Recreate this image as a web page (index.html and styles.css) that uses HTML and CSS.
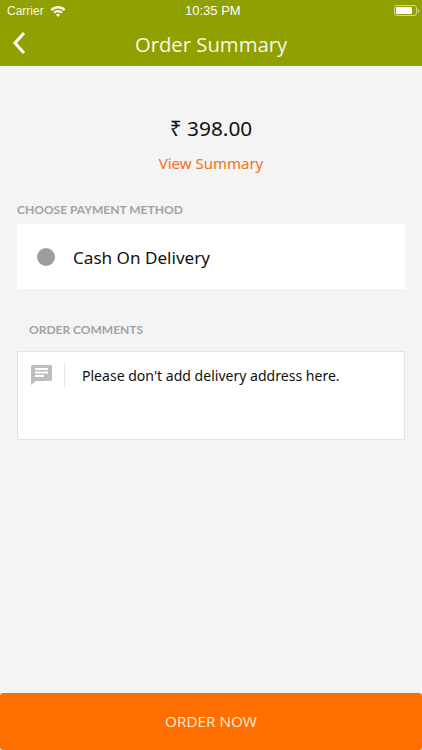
FILE: index.html
```html
<!DOCTYPE html>
<html lang="en">
<head>
    <meta charset="UTF-8">
    <meta name="viewport" content="width=device-width, initial-scale=1.0">
    <title>Order Summary</title>
    <link rel="stylesheet" href="styles.css">
</head>
<body>
    <header class="topbar">
        <div class="status-bar">
            <div class="status-left">
                <span>Carrier</span>
                <svg class="wifi-icon" viewBox="0 0 16 12" width="16" height="12">
                    <path d="M0.5 4.2 A10.5 10.5 0 0 1 15.5 4.2 L13.9 5.9 A8.2 8.2 0 0 0 2.1 5.9 Z" fill="#fff"/>
                    <path d="M3.2 7 A6.7 6.7 0 0 1 12.8 7 L11.2 8.6 A4.4 4.4 0 0 0 4.8 8.6 Z" fill="#fff"/>
                    <path d="M5.9 9.7 A3 3 0 0 1 10.1 9.7 L8 11.9 Z" fill="#fff"/>
                </svg>
            </div>
            <span class="status-time">10:35 PM</span>
            <div class="battery">
                <div class="battery-body"><div class="battery-level"></div></div>
                <div class="battery-tip"></div>
            </div>
        </div>
        <div class="navbar">
            <svg class="back-icon" viewBox="0 0 14 24" width="14" height="24">
                <path d="M12 2 L3 12 L12 22" fill="none" stroke="#fff" stroke-width="3"/>
            </svg>
            <h1 class="nav-title">Order Summary</h1>
        </div>
    </header>

    <main class="content">
        <div class="total">
            <div class="amount">₹ 398.00</div>
            <a class="view-summary" href="#">View Summary</a>
        </div>

        <h2 class="section-label">CHOOSE PAYMENT METHOD</h2>
        <div class="payment-card">
            <span class="radio-dot"></span>
            <span class="payment-name">Cash On Delivery</span>
        </div>

        <h2 class="section-label comments-label">ORDER COMMENTS</h2>
        <div class="comment-box">
            <div class="comment-icon">
                <svg viewBox="0 0 21 21" width="21" height="21">
                    <path d="M1.5 0 H19.5 A1.5 1.5 0 0 1 21 1.5 V14.5 A1.5 1.5 0 0 1 19.5 16 H5 L0 20 V1.5 A1.5 1.5 0 0 1 1.5 0 Z" fill="#bdbdbd"/>
                    <path d="M4 4 H17 M4 7.5 H17 M4 11 H13" stroke="#fff" stroke-width="1.8"/>
                </svg>
            </div>
            <p class="comment-text">Please don't add delivery address here.</p>
        </div>
    </main>

    <button class="order-button">ORDER NOW</button>
</body>
</html>
```

FILE: styles.css
```css
html, body {
    height: 100%;
}
body {
    font-family: "Open Sans", sans-serif;
    margin: 0;
    padding: 0;
    background-color: #f4f4f4;
    display: flex;
    flex-direction: column;
}
.topbar {
    background-color: #90a000;
    color: white;
    height: 66px;
    flex-shrink: 0;
}
.status-bar {
    display: flex;
    justify-content: space-between;
    align-items: center;
    height: 21px;
    padding: 0 3px 0 7px;
    font-family: "Liberation Sans", sans-serif;
    font-size: 12px;
    position: relative;
}
.status-left {
    display: flex;
    align-items: center;
    gap: 6px;
    opacity: 0.9;
}
.status-time {
    position: absolute;
    left: 185px;
    font-size: 13px;
}
.battery {
    display: flex;
    align-items: center;
}
.battery-body {
    width: 23px;
    height: 11px;
    border: 1px solid rgba(255, 255, 255, 0.6);
    border-radius: 3px;
    padding: 1px;
    box-sizing: border-box;
}
.battery-level {
    width: 16px;
    height: 100%;
    background-color: white;
    border-radius: 1px;
}
.battery-tip {
    width: 1px;
    height: 4px;
    background-color: rgba(255, 255, 255, 0.6);
    margin-left: 1px;
}
.navbar {
    display: flex;
    justify-content: center;
    align-items: center;
    height: 45px;
    position: relative;
}
.back-icon {
    position: absolute;
    left: 12px;
    top: 10px;
}
.nav-title {
    margin: 0;
    font-size: 20.3px;
    font-weight: 400;
    color: #f8f8e4;
}
.content {
    flex: 1;
    padding: 0 17px;
}
.total {
    text-align: center;
    padding-top: 48px;
}
.amount {
    font-family: "Noto Sans", sans-serif;
    font-size: 20.8px;
    line-height: 28px;
    color: #111;
}
.view-summary {
    display: block;
    margin-top: 11px;
    font-family: "Noto Sans", sans-serif;
    font-size: 15px;
    line-height: 20px;
    color: #f0701e;
    text-decoration: none;
}
.section-label {
    margin: 29px 0 7px;
    font-family: "Lato", sans-serif;
    font-size: 12px;
    line-height: 15px;
    font-weight: 700;
    color: #a2a2a2;
}
.comments-label {
    margin: 33px 0 14px 12px;
}
.payment-card {
    display: flex;
    align-items: center;
    height: 65px;
    background-color: white;
    padding-left: 20px;
}
.radio-dot {
    width: 18px;
    height: 18px;
    border-radius: 50%;
    background-color: #9e9e9e;
    margin-right: 18px;
}
.payment-name {
    padding-top: 2px;
    font-family: "Noto Sans", sans-serif;
    font-size: 17.1px;
    color: #111;
}
.comment-box {
    display: flex;
    align-items: flex-start;
    height: 89px;
    box-sizing: border-box;
    background-color: white;
    border: 1px solid #e4e4e4;
    padding-top: 10px;
}
.comment-icon {
    width: 47px;
    height: 26px;
    margin-right: 17px;
    padding: 3px 0 0 13px;
    box-sizing: border-box;
    border-right: 1px solid #e6e6e6;
}
.comment-text {
    margin: 0;
    padding-top: 1px;
    font-family: "Noto Sans", sans-serif;
    font-size: 14.05px;
    line-height: 26px;
    color: #111;
}
.order-button {
    flex-shrink: 0;
    width: 100%;
    height: 57px;
    padding-bottom: 3px;
    border: none;
    border-radius: 3px;
    background-color: #ff6f00;
    color: #ffe9d6;
    font-family: "Open Sans", sans-serif;
    font-size: 15.3px;
}
```
